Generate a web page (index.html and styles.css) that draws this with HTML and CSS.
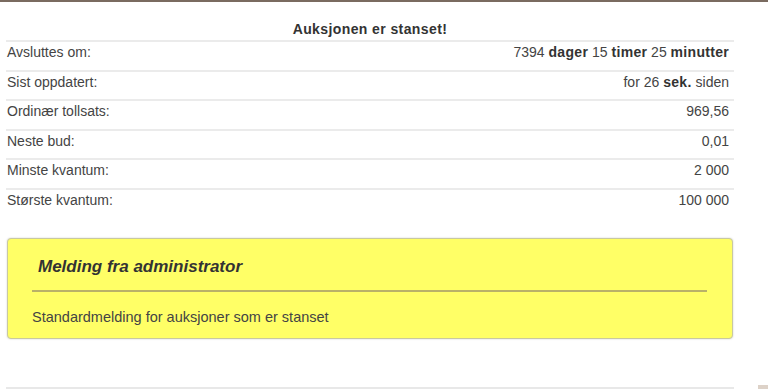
FILE: index.html
```html
<!DOCTYPE html>
<html lang="no">
<head>
    <meta charset="utf-8">
    <title>Auksjon</title>
    <link rel="stylesheet" href="styles.css">
</head>
<body>
<div class="topbar"></div>
<div class="main">
    <div class="auction">
        <p class="auction-title">Auksjonen er stanset!</p>
        <div class="auction-row"><span>Avsluttes om:</span><span>7394 <b>dager</b> 15 <b>timer</b> 25 <b>minutter</b></span></div>
        <div class="auction-row"><span>Sist oppdatert:</span><span>for 26 <b>sek.</b> siden</span></div>
        <div class="auction-row"><span>Ordinær tollsats:</span><span>969,56</span></div>
        <div class="auction-row"><span>Neste bud:</span><span>0,01</span></div>
        <div class="auction-row"><span>Minste kvantum:</span><span>2 000</span></div>
        <div class="auction-row"><span>Største kvantum:</span><span>100 000</span></div>
    </div>
    <div class="notice">
        <h3 class="notice-title">Melding fra administrator</h3>
        <hr class="notice-line">
        <p class="notice-text">Standardmelding for auksjoner som er stanset</p>
    </div>
    <div class="footer">
        <div class="footer-line"></div>
        <div class="footer-mark"></div>
    </div>
</div>
</body>
</html>
```

FILE: styles.css
```css
body {
    margin: 0;
    font-family: "Liberation Sans", Arial, sans-serif;
    font-size: 14px;
    color: #444;
    background: #fff;
}

.topbar {
    height: 2px;
    background: #7a6b60;
}

.main {
    padding-left: 6px;
}

.auction {
    width: 728px;
}

.auction-title {
    margin: 0;
    padding: 19px 0 2px;
    line-height: 17px;
    text-align: center;
    font-weight: bold;
    letter-spacing: .4px;
    color: #333;
}

.auction-row {
    display: flex;
    justify-content: space-between;
    border-top: 2px solid #ebebeb;
    padding: 2px 5px 8.5px 1px;
    line-height: 17px;
}

.auction-row b {
    color: #333;
    letter-spacing: .3px;
}

.notice {
    width: 675px;
    margin: 21px 0 0 1px;
    padding: 18px 25px 12px 24px;
    background: #ffff66;
    border: 1px solid #c9c9a0;
    border-radius: 4px;
    box-shadow: 0 0 2px rgba(0, 0, 0, .2);
}

.notice-title {
    margin: 0 0 0 6px;
    font-size: 17px;
    line-height: 20px;
    font-style: italic;
    font-weight: bold;
    color: #333;
}

.notice-line {
    margin: 13px 0 0;
    border: 0;
    height: 2px;
    background: #b9b168;
}

.notice-text {
    margin: 17px 0 0;
    font-size: 14.5px;
    line-height: 17px;
}

.footer {
    display: flex;
    align-items: flex-end;
    gap: 24px;
    margin-top: 46px;
}

.footer-line {
    width: 728px;
    height: 2px;
    background: #e8e8e8;
}

.footer-mark {
    width: 10px;
    height: 4px;
    background: #ddd2c8;
}
```
